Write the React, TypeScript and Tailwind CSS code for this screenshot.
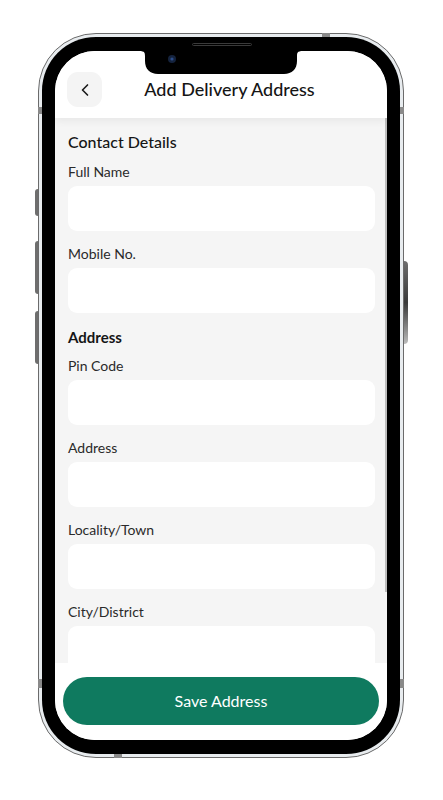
import React from 'react';
import { ChevronLeft } from 'lucide-react';

const font = { fontFamily: '"Lato", "Open Sans", sans-serif' };

const Field: React.FC<{ label: string }> = ({ label }) => (
  <div className="mb-[13px]">
    <div className="h-[20px] leading-[20px] text-[14px] text-[#2a2a2a] mb-[4px]">{label}</div>
    <div className="h-[45px] rounded-[9px] bg-white" />
  </div>
);

const App: React.FC = () => {
  return (
    <div className="w-[443px] h-[800px] bg-white pt-[33px] pl-[38px]" style={font}>
      {/* phone body */}
      <div className="relative w-[366px] h-[725px] rounded-[58px] border border-[#6b6b6b] bg-[#e8ecef] p-[3px]">
        {/* side buttons */}
        <div className="absolute left-[-4px] top-[155px] w-[3px] h-[27px] rounded-l-sm bg-[#6e6e6e]" />
        <div className="absolute left-[-4px] top-[207px] w-[3px] h-[53px] rounded-l-sm bg-[#6e6e6e]" />
        <div className="absolute left-[-4px] top-[277px] w-[3px] h-[53px] rounded-l-sm bg-[#6e6e6e]" />
        <div className="absolute right-[-5px] top-[227px] w-[4px] h-[83px] rounded-r-sm bg-gradient-to-b from-[#6e6e6e] via-[#3a3a3a] to-[#bdbdbd]" />
        {/* antenna bands */}
        <div className="absolute left-[283px] top-[-1px] w-[8px] h-[4px] bg-[#8a8a8a]" />
        <div className="absolute left-[-1px] top-[73px] w-[4px] h-[7px] bg-[#8a8a8a]" />
        <div className="absolute right-[-1px] top-[73px] w-[4px] h-[7px] bg-[#8a8a8a]" />
        <div className="absolute left-[-1px] top-[645px] w-[4px] h-[9px] bg-[#8a8a8a]" />
        <div className="absolute right-[-1px] top-[645px] w-[4px] h-[9px] bg-[#8a8a8a]" />
        <div className="absolute left-[75px] bottom-[-1px] w-[8px] h-[4px] bg-[#8a8a8a]" />

        {/* bezel */}
        <div className="relative w-full h-full rounded-[54px] bg-black px-[13px] py-[14px]">
          <div className="absolute left-[150px] top-[6px] w-[60px] h-[3px] rounded-full border border-[#3a3a3a]" />

          {/* screen */}
          <div className="relative w-full h-full rounded-[40px] overflow-hidden bg-white flex flex-col">
            {/* notch */}
            <svg className="absolute left-[84px] top-0 z-20" width="164" height="23" viewBox="0 0 164 23">
              <path d="M0 0 H164 C158 0 158 2 158 6 V10 C158 18 153 23 145 23 H19 C11 23 6 18 6 10 V6 C6 2 6 0 0 0 Z" fill="#000" />
              <circle cx="33" cy="8" r="4" fill="#15233d" />
              <circle cx="33" cy="8" r="1.6" fill="#2c4d8a" />
            </svg>

            {/* header */}
            <div className="relative z-10 h-[67px] shrink-0 bg-white flex items-center px-[12px] pt-[10px] shadow-[0_3px_8px_rgba(0,0,0,0.06)]">
              <button className="w-[35px] h-[35px] rounded-[11px] bg-[#f4f4f4] flex items-center justify-center text-[#1a1a1a]">
                <ChevronLeft size={20} strokeWidth={2} />
              </button>
              <div className="flex-1 text-center pr-[18px] text-[18px] font-medium text-[#151515]">
                Add Delivery Address
              </div>
            </div>

            {/* scroll content */}
            <div className="relative flex-1 min-h-0 overflow-hidden bg-[#f5f5f5] pl-[13px] pr-[12px] pt-[12px]">
              <div className="absolute right-0 top-0 w-[2px] h-[474px] bg-[#bdbdbd]" />
              <div className="h-[24px] leading-[24px] text-[16px] font-medium text-[#151515] mb-[8px]">Contact Details</div>
              <Field label="Full Name" />
              <Field label="Mobile No." />
              <div className="h-[24px] leading-[24px] text-[15px] font-bold text-[#151515] -mt-[1px] mb-[7px]">Address</div>
              <Field label="Pin Code" />
              <Field label="Address" />
              <Field label="Locality/Town" />
              <Field label="City/District" />
            </div>

            {/* footer */}
            <div className="h-[77px] shrink-0 bg-white pt-[14px] pl-[8px] pr-[8px]">
              <button className="w-full h-[48px] rounded-full bg-[#0f7a5f] text-white text-[16px]">
                Save Address
              </button>
            </div>
          </div>
        </div>
      </div>
    </div>
  );
};

export default App;
